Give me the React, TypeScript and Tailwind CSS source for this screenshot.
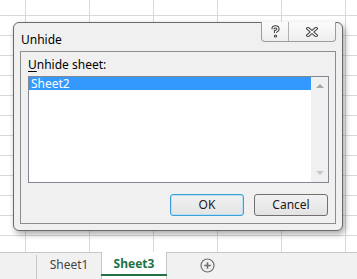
import React from 'react';

const HelpGlyph = () => (
  <svg width="9" height="13" viewBox="0 0 9 13">
    <path d="M2 4.2 Q2 1.8 4.5 1.8 Q7 1.8 7 4 Q7 5.6 4.5 6.6 L4.5 8" fill="none" stroke="#3c3c3c" strokeWidth="3.2" />
    <circle cx="4.5" cy="11" r="1.6" fill="#3c3c3c" />
    <path d="M2 4.2 Q2 1.8 4.5 1.8 Q7 1.8 7 4 Q7 5.6 4.5 6.6 L4.5 8" fill="none" stroke="#ffffff" strokeWidth="1.2" />
    <circle cx="4.5" cy="11" r="0.6" fill="#ffffff" />
  </svg>
);

const CloseGlyph = () => (
  <svg width="12" height="10" viewBox="0 0 12 10">
    <path d="M2 1.5 L10 8.5 M10 1.5 L2 8.5" stroke="#3c3c3c" strokeWidth="3.4" strokeLinecap="square" />
    <path d="M2 1.5 L10 8.5 M10 1.5 L2 8.5" stroke="#ffffff" strokeWidth="1.4" strokeLinecap="square" />
  </svg>
);

const PlusCircle = () => (
  <svg width="15" height="15" viewBox="0 0 15 15">
    <circle cx="7.5" cy="7.5" r="6.5" fill="none" stroke="#6f6f6f" strokeWidth="1.2" />
    <path d="M7.5 4.2 V10.8 M4.2 7.5 H10.8" stroke="#6f6f6f" strokeWidth="1.6" />
  </svg>
);

// Windows-style dialog button
const DlgButton = ({ label, focused }: { label: string; focused?: boolean }) => (
  <button
    className={
      focused
        ? 'w-[74px] h-[22px] rounded-[3px] border border-[#3c9fd8] bg-gradient-to-b from-[#f2f2f2] to-[#e3e3e3] text-[12px] leading-none text-[#1a1a1a] shadow-[inset_0_0_0_1px_#b8e0f7]'
        : 'w-[74px] h-[22px] rounded-[3px] border border-[#707070] bg-gradient-to-b from-[#f2f2f2] to-[#e3e3e3] text-[12px] leading-none text-[#1a1a1a]'
    }
  >
    {label}
  </button>
);

export default function App() {
  return (
    <div className="relative w-[357px] h-[279px] overflow-hidden bg-white font-['Noto_Sans',sans-serif] flex flex-col">
      {/* worksheet grid */}
      <div className="h-[252px] bg-white bg-[linear-gradient(to_right,#d9d9d9_1px,transparent_1px),linear-gradient(to_bottom,#d9d9d9_1px,transparent_1px)] bg-[length:64px_20px] bg-[position:25px_15px]" />

      {/* sheet tabs */}
      <div className="flex-1 flex bg-[#f1f1f1] border-t border-[#c6c6c6]">
        <div className="w-[36px]" />
        <div className="w-px mt-[2px] bg-[#c6c6c6]" />
        <div className="w-[64px] flex items-center justify-center pb-[2px] text-[12px] text-[#444]">Sheet1</div>
        <div className="relative -mt-px w-[66px] bg-white border-x border-[#c6c6c6] flex flex-col">
          <div className="flex-1 flex items-center justify-center pt-[1px] text-[12px] font-bold text-[#217346]">Sheet3</div>
          <div className="h-[2px] bg-[#217346] mb-[3px] -mx-px" />
        </div>
        <div className="w-[33px]" />
        <div className="flex items-center pb-[1px]">
          <PlusCircle />
        </div>
      </div>

      {/* Unhide dialog */}
      <div className="absolute left-[13px] top-[22px] w-[330px] h-[209px] rounded-[6px] border border-[#6a6a6a] bg-[#f0f0f0] shadow-[2px_3px_6px_rgba(0,0,0,0.35)] flex flex-col px-[6px] pb-[6px]">
        <div className="h-[28px] flex items-start justify-between">
          <span className="pl-[1px] pt-[9px] text-[12px] leading-[16px] text-black">Unhide</span>
          <div className="flex -mt-px h-[20px] rounded-b-[4px] border border-t-0 border-[#9c9c9c] bg-gradient-to-b from-[#fbfbfb] to-[#eeeeee] overflow-hidden">
            <div className="w-[27px] flex items-center justify-center border-r border-[#b0b0b0]">
              <HelpGlyph />
            </div>
            <div className="w-[46px] flex items-center justify-center">
              <CloseGlyph />
            </div>
          </div>
        </div>

        <div className="flex-1 border border-[#8d8d8d] flex flex-col pt-[5px] pl-[7px] pr-[6px]">
          <label className="h-[16px] mb-[3px] text-[12px] leading-[16px] text-black">
            <span className="underline underline-offset-2">U</span>nhide sheet:
          </label>
          <div className="h-[107px] border border-[#828790] bg-white flex">
            <div className="flex-1">
              <div className="h-[13px] bg-[#3399ff] pl-[2px] text-[12px] leading-[13px] text-white">Sheet2</div>
            </div>
            <div className="w-[17px] bg-[#f0f0f0] flex flex-col items-center justify-between py-[7px]">
              <div className="w-0 h-0 border-x-[4px] border-x-transparent border-b-[4px] border-b-[#a6a6a6]" />
              <div className="w-0 h-0 border-x-[4px] border-x-transparent border-t-[4px] border-t-[#c8c8c8]" />
            </div>
          </div>
          <div className="mt-[11px] flex justify-end gap-[10px] pr-px">
            <DlgButton label="OK" focused />
            <DlgButton label="Cancel" />
          </div>
        </div>
      </div>
    </div>
  );
}
